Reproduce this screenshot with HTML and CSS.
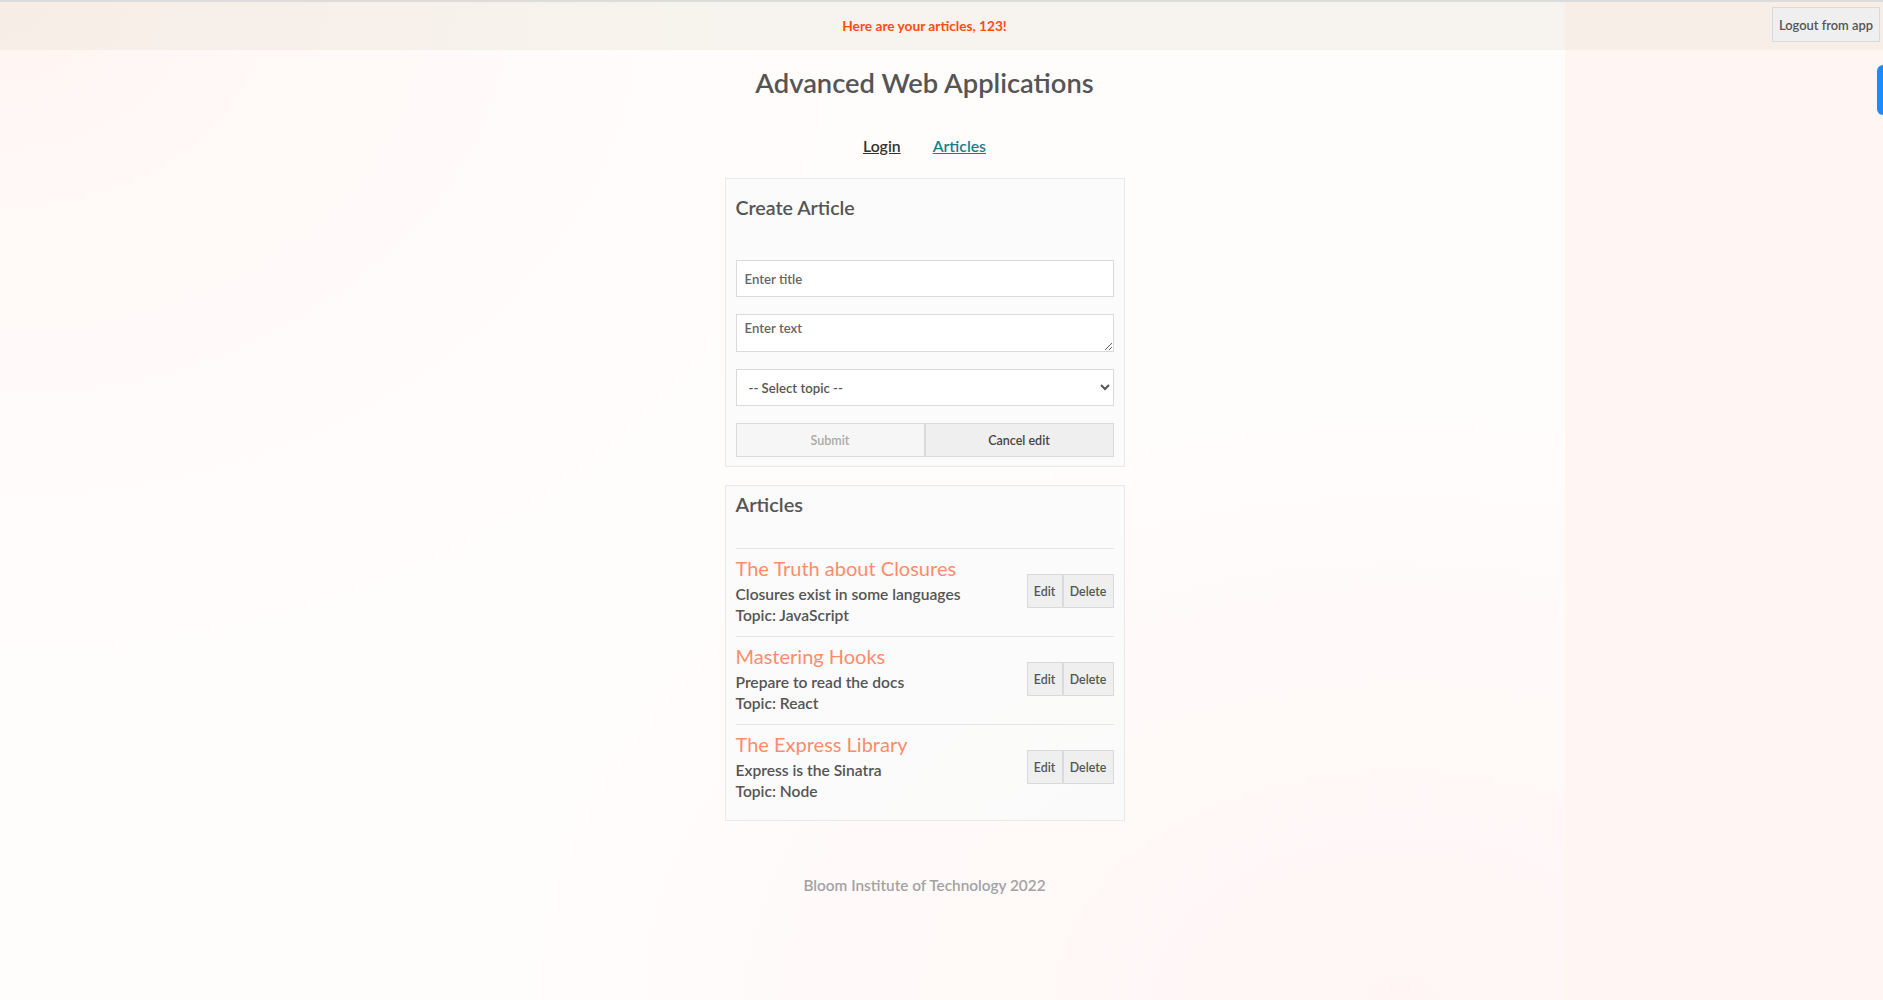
FILE: index.html
```html
<!DOCTYPE html>
<html lang="en">
<head>
<meta charset="utf-8">
<title>Advanced Web Applications</title>
<link rel="stylesheet" href="styles.css">
</head>
<body>
<header class="banner">
  <p class="message">Here are your articles, 123!</p>
  <button class="logout">Logout from app</button>
</header>
<div class="side-widget"></div>
<main class="app">
  <h1 class="app-title">Advanced Web Applications</h1>
  <nav class="nav">
    <a class="nav-link" href="#">Login</a>
    <a class="nav-link active" href="#">Articles</a>
  </nav>
  <form class="card create-card">
    <h2 class="card-title create-title">Create Article</h2>
    <input class="field" type="text" placeholder="Enter title">
    <textarea class="field area" placeholder="Enter text"></textarea>
    <select class="field select">
      <option>-- Select topic --</option>
    </select>
    <div class="form-buttons">
      <button type="button" class="btn submit" disabled>Submit</button>
      <button type="button" class="btn cancel">Cancel edit</button>
    </div>
  </form>
  <section class="card articles-card">
    <h2 class="card-title articles-title">Articles</h2>
    <div class="article">
      <div class="article-body">
        <h3 class="article-name">The Truth about Closures</h3>
        <p class="article-text">Closures exist in some languages</p>
        <p class="article-text">Topic: JavaScript</p>
      </div>
      <div class="article-actions">
        <button class="btn small edit">Edit</button><button class="btn small delete">Delete</button>
      </div>
    </div>
    <div class="article">
      <div class="article-body">
        <h3 class="article-name">Mastering Hooks</h3>
        <p class="article-text">Prepare to read the docs</p>
        <p class="article-text">Topic: React</p>
      </div>
      <div class="article-actions">
        <button class="btn small edit">Edit</button><button class="btn small delete">Delete</button>
      </div>
    </div>
    <div class="article">
      <div class="article-body">
        <h3 class="article-name">The Express Library</h3>
        <p class="article-text">Express is the Sinatra</p>
        <p class="article-text">Topic: Node</p>
      </div>
      <div class="article-actions">
        <button class="btn small edit">Edit</button><button class="btn small delete">Delete</button>
      </div>
    </div>
  </section>
  <footer class="footer">Bloom Institute of Technology 2022</footer>
</main>
</body>
</html>
```
FILE: styles.css
```css
* { box-sizing: border-box; }
html, body { margin: 0; padding: 0; }
body {
  font-family: Lato, "Noto Sans", sans-serif;
  color: #555;
  min-height: 1000px;
  background:
    linear-gradient(to right, transparent 1565px, #fff6f4 1565px),
    radial-gradient(ellipse 900px 700px at 0 0, #fff5f3 0%, rgba(255,250,249,0.6) 60%, rgba(255,255,255,0) 100%),
    radial-gradient(ellipse 900px 600px at 1400px 1000px, #fff5f5 0%, rgba(255,255,255,0) 100%),
    #fffdfc;
}
.banner {
  position: relative;
  height: 50px;
  border-top: 2px solid #dcdcdc;
  background: rgba(225, 215, 195, 0.25);
  display: flex;
  align-items: center;
}
.message {
  margin: 0 0 1px;
  width: 1849px;
  text-align: center;
  color: #ff4d12;
  font-size: 13.7px;
  font-weight: 700;
}
.logout {
  position: absolute;
  top: 5px;
  right: 3px;
  width: 108px;
  height: 35px;
  padding: 0;
  background: #efefef;
  border: 1px solid #dadada;
  color: #555;
  font-family: inherit;
  font-size: 12.9px;
  font-weight: 600;
}
.side-widget {
  position: absolute;
  top: 65px;
  right: 0;
  width: 6px;
  height: 50px;
  background: #1a8cff;
  border-radius: 6px 0 0 6px;
}
.app {
  width: 1849px;
  display: flex;
  flex-direction: column;
  align-items: center;
}
.app-title {
  margin: 13px 0 0;
  font-size: 27.3px;
  line-height: 40px;
  font-weight: 600;
  color: #555;
}
.nav {
  margin-top: 31px;
  display: flex;
  gap: 32px;
  line-height: 24px;
}
.nav-link {
  font-size: 15.8px;
  font-weight: 600;
  color: #333;
  text-decoration: underline;
}
.nav-link.active { color: #1b7d8c; }
.card {
  width: 400px;
  margin-top: 20px;
  border: 1px solid #e9e9e9;
  background: rgba(250, 250, 250, 0.85);
  padding: 0 10px 9px;
  display: flex;
  flex-direction: column;
}
.card-title {
  margin: 0;
  font-weight: 600;
  color: #555;
  line-height: 30px;
}
.create-title { font-size: 19.6px; padding-top: 13.5px; height: 81px; }
.field {
  display: block;
  width: 100%;
  height: 37px;
  margin: 0 0 17px;
  border: 1px solid #dadada;
  background: #fff;
  font-family: inherit;
  font-size: 13.2px;
  font-weight: 600;
  color: #555;
  padding: 0 8px;
}
.field::placeholder { color: #666; }
.area { height: 38px; padding-top: 5px; resize: vertical; }
.select { padding-left: 8px; color: #555; }
.form-buttons { display: flex; }
.btn {
  font-family: inherit;
  font-size: 12.5px;
  font-weight: 600;
  color: #444;
  background: #efefef;
  border: 1px solid #dadada;
  height: 34px;
  padding: 0;
}
.form-buttons .btn { flex: 1; }
.submit { background: #f6f6f6; color: #aaa; }
.articles-card { margin-top: 18px; padding-bottom: 8px; }
.articles-title { font-size: 20px; padding-top: 3px; height: 62px; }
.article {
  border-top: 1px solid #e6e6e6;
  padding: 3px 0 10px;
  display: flex;
  align-items: center;
  justify-content: space-between;
}
.article-name {
  margin: 0;
  font-size: 20px;
  line-height: 32px;
  font-weight: 400;
  color: #ff8c69;
}
.article-text {
  margin: 0;
  font-size: 15.6px;
  line-height: 21px;
  font-weight: 600;
  color: #555;
}
.article-actions { display: flex; margin-top: 4px; }
.btn.small { color: #555; font-size: 12.4px; }
.btn.edit { width: 36px; }
.btn.delete { width: 51px; }
.footer {
  margin-top: 55px;
  font-size: 15.35px;
  font-weight: 600;
  color: #a3a3a3;
}
```
